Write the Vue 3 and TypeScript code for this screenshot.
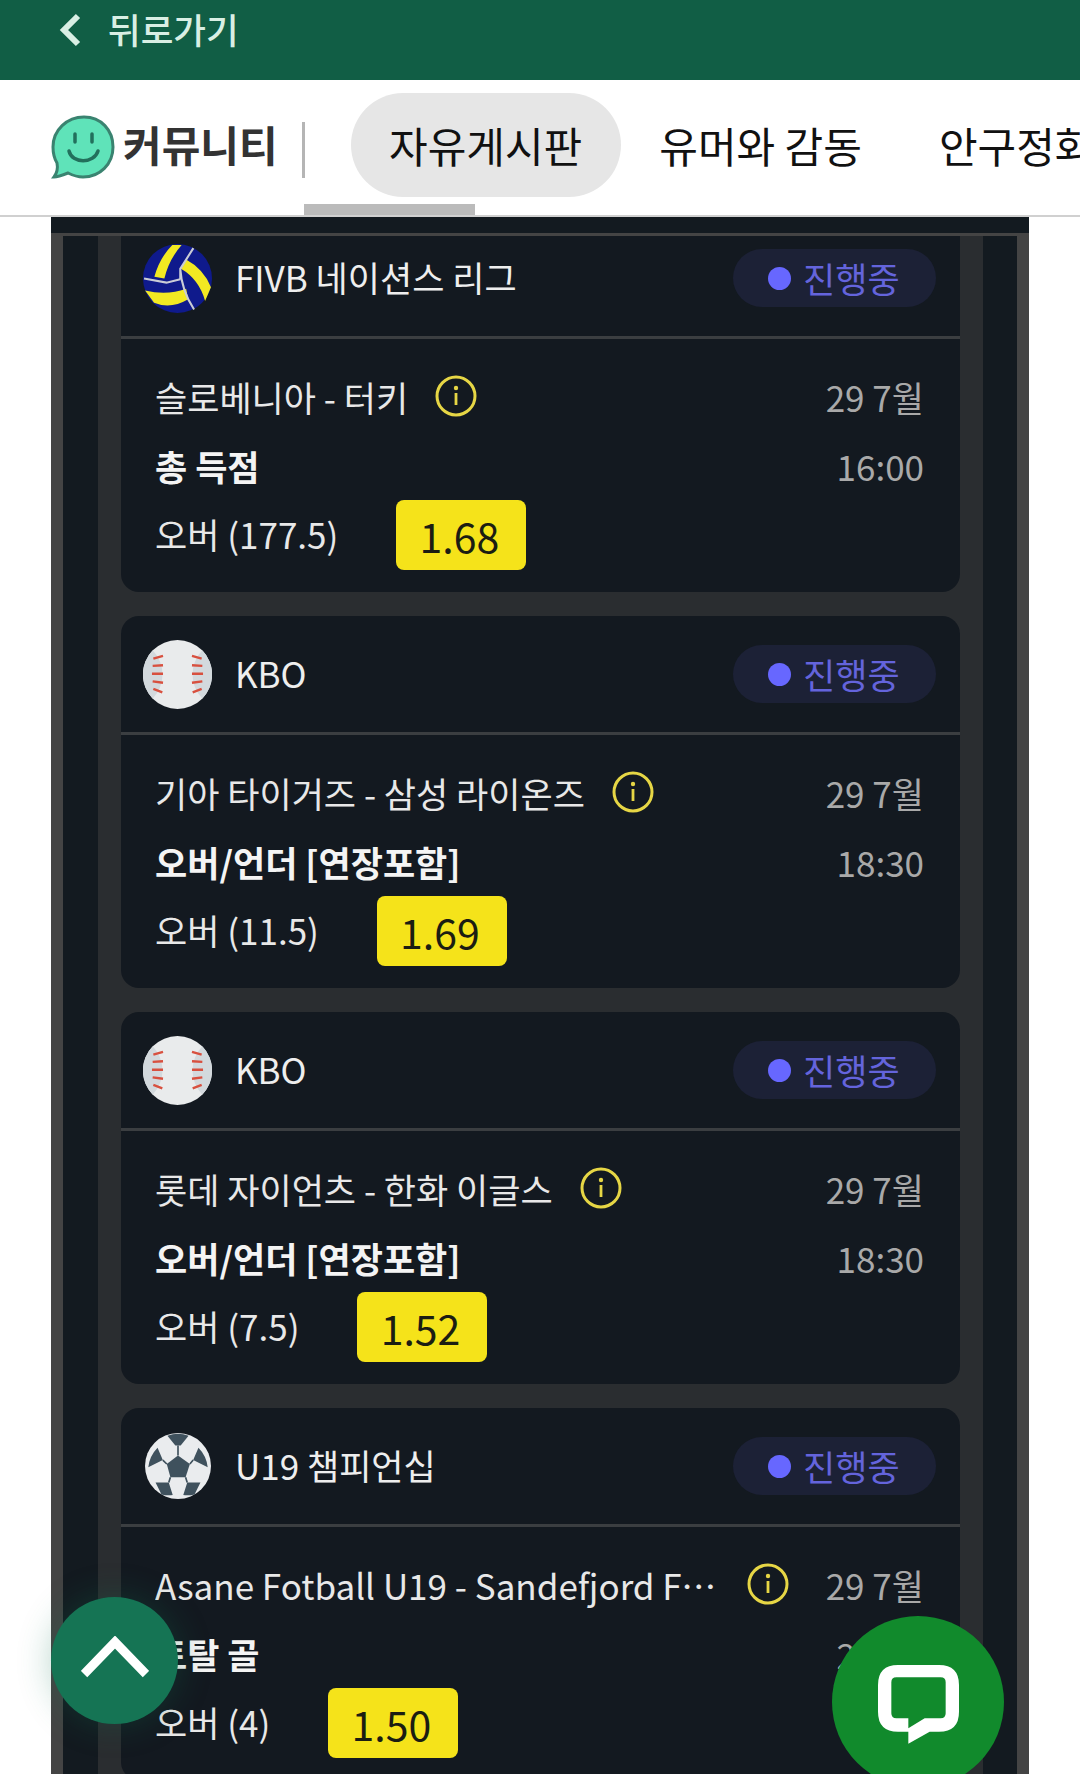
<script setup lang="ts">
type Sport = 'volley' | 'baseball' | 'soccer'

interface Bet {
  sport: Sport
  league: string
  match: string
  date: string
  market: string
  time: string
  pick: string
  odds: string
}

const tabs = ['자유게시판', '유머와 감동', '안구정화']

const bets: Bet[] = [
  { sport: 'volley', league: 'FIVB 네이션스 리그', match: '슬로베니아 - 터키', date: '29 7월', market: '총 득점', time: '16:00', pick: '오버 (177.5)', odds: '1.68' },
  { sport: 'baseball', league: 'KBO', match: '기아 타이거즈 - 삼성 라이온즈', date: '29 7월', market: '오버/언더 [연장포함]', time: '18:30', pick: '오버 (11.5)', odds: '1.69' },
  { sport: 'baseball', league: 'KBO', match: '롯데 자이언츠 - 한화 이글스', date: '29 7월', market: '오버/언더 [연장포함]', time: '18:30', pick: '오버 (7.5)', odds: '1.52' },
  { sport: 'soccer', league: 'U19 챔피언십', match: 'Asane Fotball U19 - Sandefjord Fotball U19', date: '29 7월', market: '토탈 골', time: '20:00', pick: '오버 (4)', odds: '1.50' },
]
</script>

<template>
  <div class="page">
    <header class="topbar">
      <svg class="back" width="24" height="34" viewBox="0 0 24 34" fill="none">
        <path d="M20 3 L6 17 L20 31" stroke="#d9efe4" stroke-width="6" />
      </svg>
      <span class="back-label">뒤로가기</span>
    </header>

    <nav class="nav">
      <svg class="logo" width="64" height="66" viewBox="0 0 64 66">
        <path d="M33 2 C50 2 62 15 62 32 C62 49 49 62 32 62 C26 62 21 60 17 58 C12 60 7 62 3 62 C6 58 7 53 6 48 C3 43 2 38 2 32 C2 15 16 2 33 2 Z" fill="#5fe3b9" stroke="#3a8370" stroke-width="3" />
        <path d="M24 19 V27 M41 19 V27" stroke="#22705c" stroke-width="3.5" stroke-linecap="round" />
        <path d="M18 36 C21 49 43 49 47 36" fill="none" stroke="#22705c" stroke-width="3.5" stroke-linecap="round" />
      </svg>
      <span class="nav-title">커뮤니티</span>
      <i class="nav-div"></i>
      <div class="tabs">
        <span v-for="(t, i) in tabs" :key="t" class="tab" :class="{ on: i === 0 }">{{ t }}</span>
      </div>
      <i class="nav-scroll"></i>
    </nav>

    <main class="panel">
      <div class="frame">
        <div class="strip">
          <section v-for="(b, i) in bets" :key="i" class="card">
            <div class="card-head">
              <svg v-if="b.sport === 'volley'" class="ball" viewBox="0 0 200 200">
                <circle cx="100" cy="100" r="100" fill="#0f1a8c" />
                <path d="M85 3 Q48 40 33 95 L62 100 Q75 45 112 3 Z" fill="#f2e922" />
                <path d="M125 45 Q175 72 197 125 L180 165 Q162 102 110 72 Z" fill="#f2e922" />
                <path d="M6 135 Q70 150 125 130 L131 160 Q80 190 32 170 Z" fill="#f2e922" />
                <path d="M146 12 L108 72 Q112 135 148 190 M3 100 L68 112 L108 102 M108 72 L108 102" fill="none" stroke="#c9ccd6" stroke-width="6" />
              </svg>
              <svg v-else-if="b.sport === 'baseball'" class="ball" viewBox="-100 -100 200 200">
                <circle r="100" fill="#e9ebec" />
                <path d="M-72 -70 A100 100 0 0 0 -72 70 A100 100 0 0 0 -72 -70 Z M72 -70 A100 100 0 0 1 72 70 A100 100 0 0 1 72 -70 Z" fill="#d3d9dd" />
                <path d="M-70 -46 L-42 -54 M-72 -25 L-42 -27 M-74 -2 L-42 -2 M-72 20 L-42 24 M-70 42 L-44 52 M70 -46 L42 -54 M72 -25 L42 -27 M74 -2 L42 -2 M72 20 L42 24 M70 42 L44 52" stroke="#d8503f" stroke-width="7" fill="none" />
              </svg>
              <svg v-else class="ball soccer" viewBox="-100 -100 200 200">
                <circle r="100" fill="#eaecee" />
                <path d="M0 -32 L36 -6 L23 34 L-23 34 L-34 -6 Z" fill="#3f515d" />
                <path d="M-32 -92 A100 100 0 0 1 32 -92 L8 -62 H-8 Z" fill="#3f515d" />
                <path d="M-62 -55 L-46 -18 L-90 4 A100 100 0 0 1 -62 -55 Z M62 -55 L46 -18 L90 4 A100 100 0 0 0 62 -55 Z" fill="#3f515d" />
                <path d="M-68 50 H-28 L-16 88 A100 100 0 0 1 -50 86 Z M68 50 H28 L16 88 A100 100 0 0 0 50 86 Z" fill="#3f515d" />
                <path d="M0 -32 V-62 M-34 -6 L-46 -18 M36 -6 L46 -18 M-23 34 L-28 50 M23 34 L28 50" stroke="#3f515d" stroke-width="5" />
              </svg>
              <span class="league">{{ b.league }}</span>
              <span class="status"><i class="dot"></i><span class="status-text">진행중</span></span>
            </div>
            <div class="card-body">
              <div class="row">
                <div class="match">
                  <span class="match-name">{{ b.match }}</span>
                  <svg class="info" width="42" height="42" viewBox="0 0 42 42" fill="none">
                    <circle cx="21" cy="21" r="19" stroke="#e6d645" stroke-width="3" />
                    <circle cx="21" cy="13" r="2.2" fill="#e6d645" />
                    <rect x="19.6" y="18" width="2.8" height="12" fill="#e6d645" />
                  </svg>
                </div>
                <span class="when">{{ b.date }}</span>
              </div>
              <div class="row row-market">
                <strong class="market">{{ b.market }}</strong>
                <span class="when">{{ b.time }}</span>
              </div>
              <div class="pick-row">
                <span class="pick">{{ b.pick }}</span>
                <span class="odds">{{ b.odds }}</span>
              </div>
            </div>
          </section>
        </div>
      </div>
    </main>

    <button class="fab-up" type="button" aria-label="top">
      <svg width="68" height="42" viewBox="0 0 68 42" fill="none">
        <path d="M3 38 L34 6 L65 38" stroke="#fff" stroke-width="9" />
      </svg>
    </button>
    <button class="fab-chat" type="button" aria-label="chat">
      <svg width="81" height="80" viewBox="0 0 243 240">
        <path fill="#fff" fill-rule="evenodd" d="M60 0 H183 Q243 0 243 60 V140 Q243 200 183 200 H155 L91 236 V200 H60 Q0 200 0 140 V60 Q0 0 60 0 Z M55 37 Q40 37 40 52 V145 Q40 160 55 160 H91 V190 L140 160 H188 Q203 160 203 145 V52 Q203 37 188 37 Z" />
      </svg>
    </button>
  </div>
</template>

<style scoped>
.page {
  position: relative;
  width: 1080px;
  height: 1774px;
  overflow: hidden;
  background: #fff;
  font-family: "Noto Sans CJK KR", "Noto Sans", sans-serif;
}

.topbar {
  display: flex;
  align-items: center;
  height: 56px;
  padding-bottom: 24px;
  padding-left: 58px;
  background: #115e45;
}
.back { margin-top: 4px; }
.back-label {
  margin-left: 26px;
  font-size: 35.5px;
  font-weight: 500;
  color: #d9efe4;
}

.nav {
  position: relative;
  display: flex;
  align-items: center;
  height: 135px;
  padding-left: 51px;
  background: #fff;
  border-bottom: 2px solid #d0d0d0;
  overflow: hidden;
}
.logo { flex: none; }
.nav-title {
  flex: none;
  margin-left: 8px;
  margin-top: -8px;
  font-size: 42px;
  font-weight: 700;
  color: #333;
}
.nav-div {
  flex: none;
  width: 3px;
  height: 56px;
  margin-top: 4px;
  margin-left: 24px;
  background: #b5b5b5;
}
.tabs {
  display: flex;
  flex: none;
  margin-left: 46px;
  margin-top: -6px;
}
.tab {
  display: flex;
  align-items: center;
  height: 104px;
  padding: 0 38.5px;
  font-size: 42px;
  line-height: 1;
  color: #111;
  white-space: nowrap;
  border-radius: 52px;
}
.tab.on { background: #e6e6e6; }
.nav-scroll {
  position: absolute;
  left: 304px;
  bottom: 0;
  width: 171px;
  height: 11px;
  background: #bbb;
}

.panel {
  width: 978px;
  height: 1557px;
  margin-left: 51px;
  padding-top: 16px;
  box-sizing: border-box;
  background: #131a20;
}
.frame {
  height: 100%;
  box-sizing: border-box;
  padding: 0 34px 0 35px;
  border: solid #444;
  border-width: 3px 12px 0;
  background: #131a20;
  overflow: hidden;
}
.strip {
  margin-top: -16px;
  padding: 0 23px;
  background: #2a2d30;
  display: flex;
  flex-direction: column;
  gap: 24px;
}
.card {
  flex: none;
  border-radius: 18px;
  background: #131920;
}
.card-head {
  display: flex;
  align-items: center;
  height: 116px;
  padding: 0 24px 0 22px;
  border-bottom: 3px solid #3b3e41;
}
.ball { flex: none; width: 69px; height: 69px; }
.ball.soccer { width: 66px; height: 66px; margin: 0 1px 0 2px; }
.league {
  margin-left: 23px;
  margin-top: -3px;
  font-size: 35px;
  color: #eee;
}
.status {
  display: flex;
  align-items: center;
  margin-left: auto;
  width: 203px;
  height: 58px;
  box-sizing: border-box;
  padding-left: 35px;
  border-radius: 29px;
  font-size: 35px;
  color: #6464dc;
  background: #1c2136;
}
.status-text { margin-top: -2px; }
.dot {
  width: 23px;
  height: 23px;
  margin-right: 12px;
  border-radius: 50%;
  background: #6767ff;
}

.card-body {
  padding: 34px 36px 22px 34px;
}
.row {
  display: flex;
  align-items: center;
  justify-content: space-between;
  height: 46px;
}
.row-market { margin-top: 23px; }
.match {
  display: flex;
  align-items: center;
  gap: 27px;
  min-width: 0;
}
.match-name {
  max-width: 565px;
  overflow: hidden;
  text-overflow: ellipsis;
  white-space: nowrap;
  font-size: 35px;
  color: #e8e8e8;
}
.info { flex: none; }
.when {
  flex: none;
  font-size: 35px;
  color: #a9a9a9;
}
.market {
  font-size: 35px;
  font-weight: 700;
  color: #f4f4f4;
}
.pick-row {
  display: flex;
  align-items: center;
  gap: 58px;
  margin-top: 12px;
}
.pick {
  margin-top: -3px;
  font-size: 35px;
  color: #e8e8e8;
}
.odds {
  display: flex;
  align-items: center;
  justify-content: center;
  width: 130px;
  height: 70px;
  padding-right: 4px;
  box-sizing: border-box;
  border-radius: 8px;
  font-size: 41px;
  color: #1b1d12;
  background: #f5e31a;
}

.fab-up,
.fab-chat {
  position: absolute;
  display: flex;
  align-items: center;
  justify-content: center;
  padding: 0;
  border: 0;
  border-radius: 50%;
}
.fab-up {
  left: 51px;
  top: 1597px;
  width: 127px;
  height: 127px;
  background: #157454;
  box-shadow: 0 0 34px rgba(21, 116, 84, 0.3);
}
.fab-up svg { margin-top: -8px; }
.fab-chat {
  left: 832px;
  top: 1616px;
  width: 172px;
  height: 172px;
  background: #118a2c;
}
.fab-chat svg { margin-top: 6px; }
</style>
